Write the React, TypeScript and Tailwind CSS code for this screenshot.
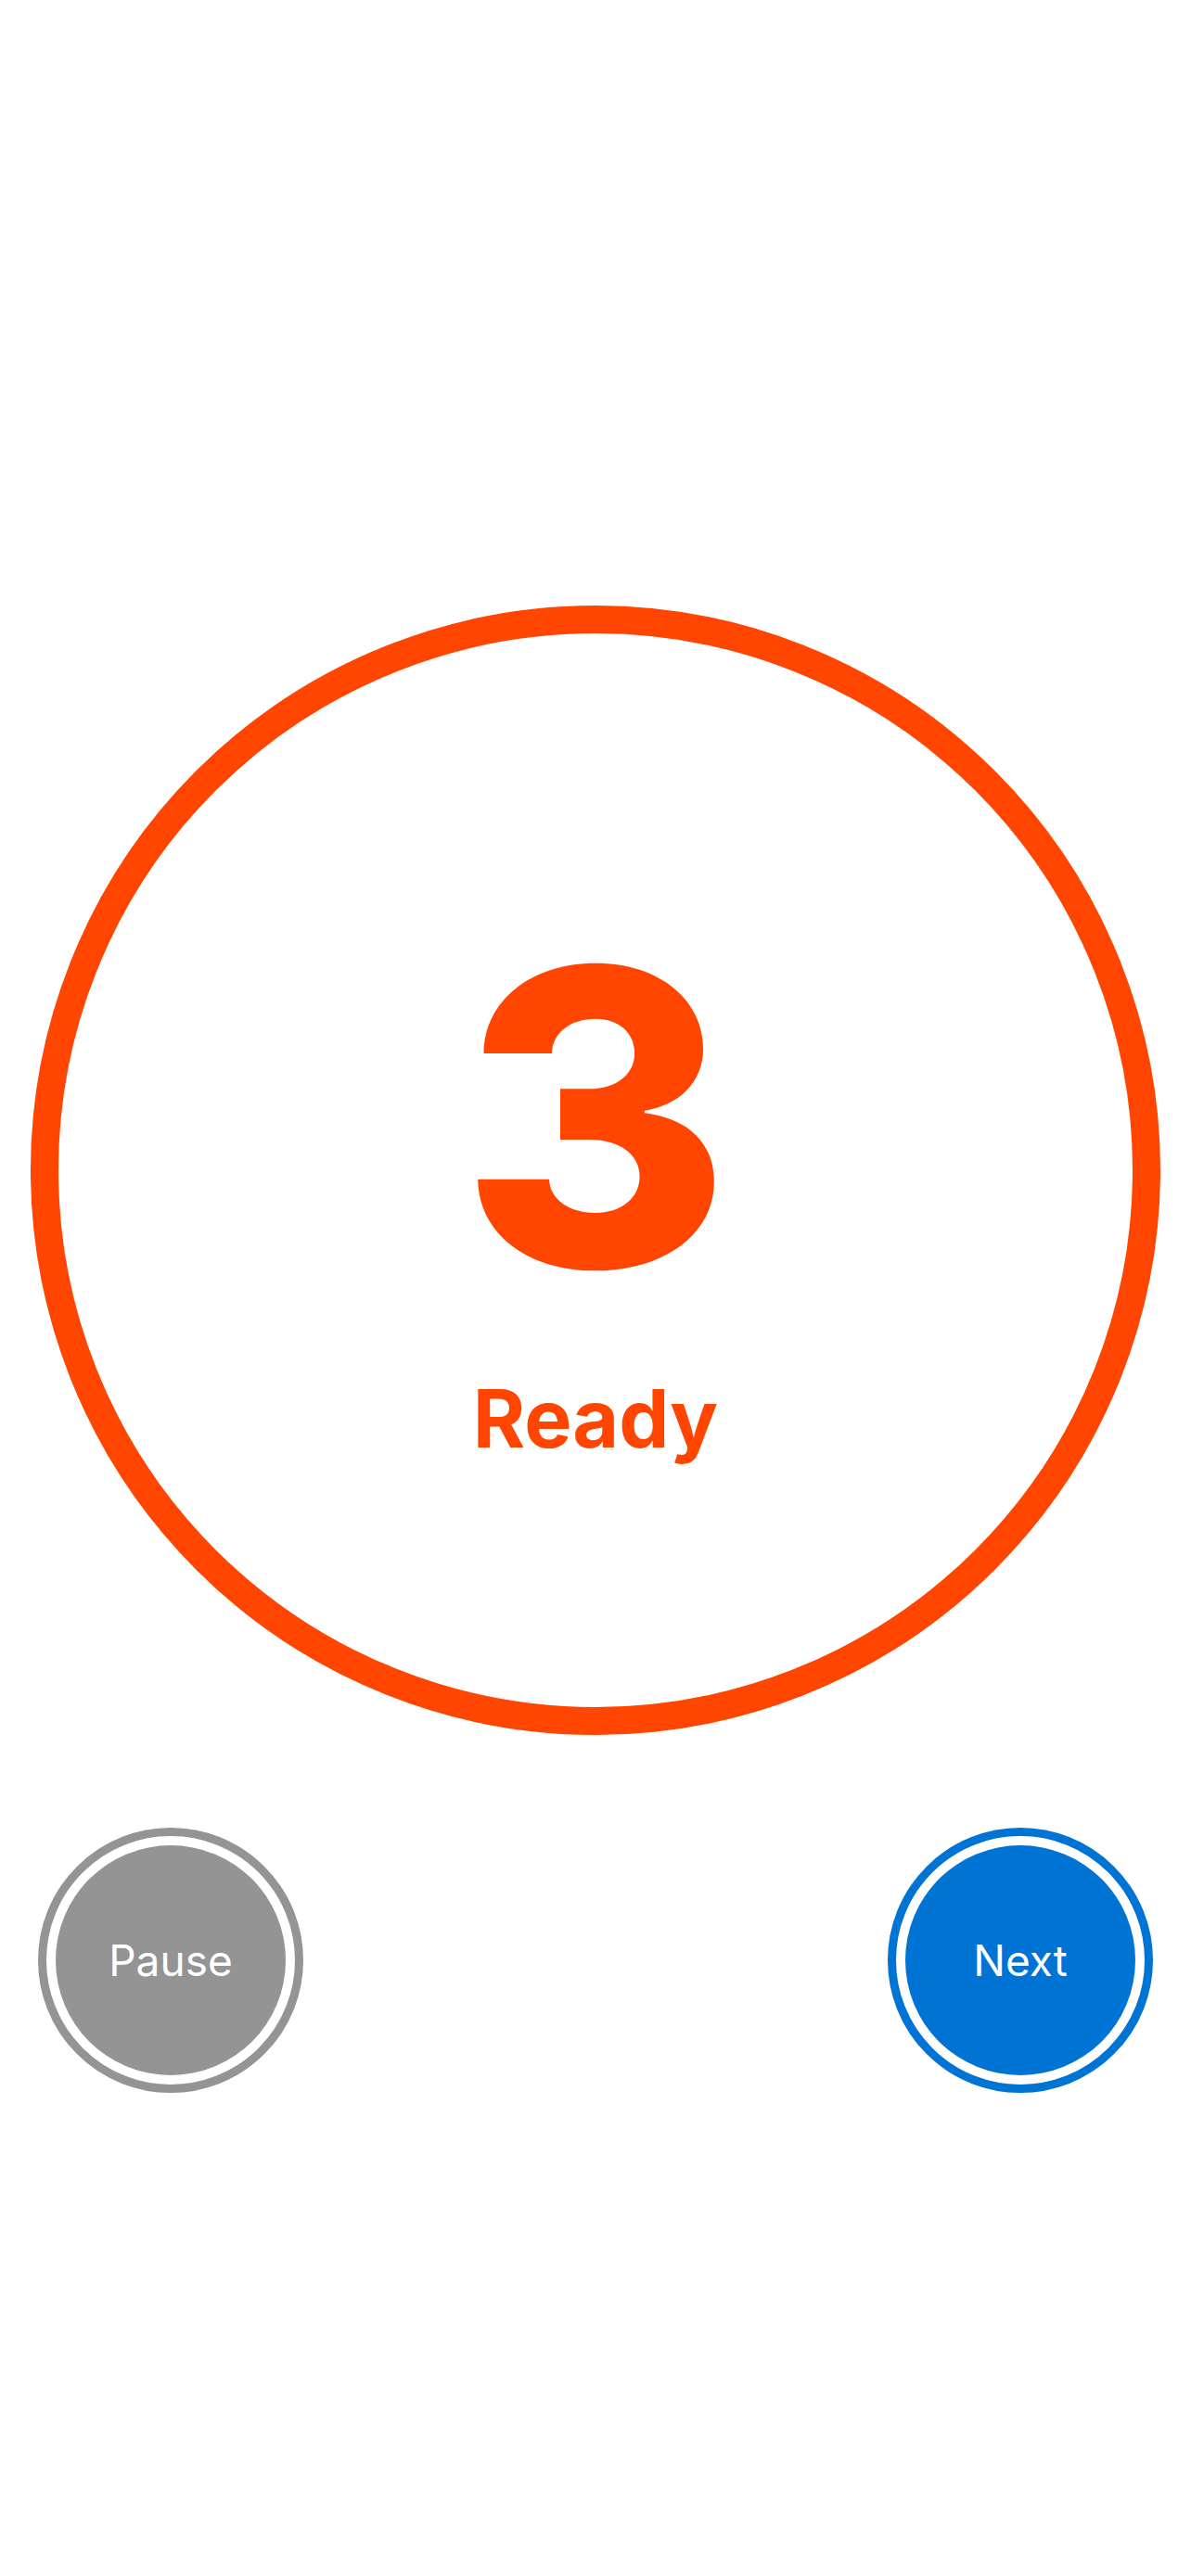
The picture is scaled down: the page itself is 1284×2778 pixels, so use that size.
import React from "react";

/* Countdown screen: big ring with the count and a state label, then two
   round ring-buttons (Pause / Next) underneath. */

function RingButton({ label, ring, fill }: { label: string; ring: string; fill: string }) {
  return (
    <button
      type="button"
      className={`w-[286px] h-[286px] rounded-full border-[9px] p-[10px] ${ring}`}
    >
      <span className={`w-full h-full rounded-full flex items-center justify-center text-white text-[46px] font-normal ${fill}`}>
        {label}
      </span>
    </button>
  );
}

export default function App() {
  return (
    <div
      className="w-[1284px] min-h-[2778px] bg-white flex flex-col items-center pt-[653px]"
      style={{ fontFamily: "Inter, 'Noto Sans', sans-serif" }}
    >
      {/* countdown ring */}
      <div className="w-[1218px] h-[1218px] rounded-full border-[30px] border-[#ff4500] flex flex-col items-center justify-center pt-[32px] text-[#ff4500]">
        <span className="text-[444px] leading-none font-extrabold">3</span>
        <span className="mt-[60px] text-[86px] leading-none font-bold">Ready</span>
      </div>

      {/* controls */}
      <div className="w-full mt-[100px] px-[41px] flex justify-between">
        <RingButton label="Pause" ring="border-[#939493]" fill="bg-[#939493]" />
        <RingButton label="Next" ring="border-[#0074d5]" fill="bg-[#0074d5]" />
      </div>
    </div>
  );
}
